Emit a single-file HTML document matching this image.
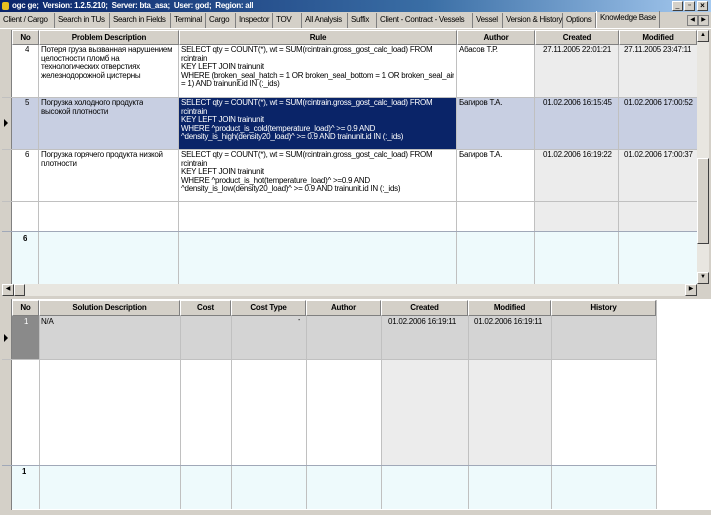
<!DOCTYPE html>
<html><head><meta charset="utf-8"><style>
*{margin:0;padding:0;box-sizing:border-box}
body{width:711px;height:515px;background:#d4d0c8;position:relative;overflow:hidden;font-family:"Liberation Sans",Arial,sans-serif;font-size:8px;color:#000}
.a{position:absolute}
.t{line-height:8.6px;letter-spacing:-0.25px;white-space:nowrap;overflow:hidden}
.hd{position:absolute;background:#d4d0c8;border-right:1px solid #808080;border-bottom:1px solid #808080;border-left:1px solid #fff;border-top:1px solid #fff;font-weight:bold;font-size:8px;text-align:center;line-height:13px;letter-spacing:-0.2px}
.tab{position:absolute;top:13px;height:15px;font-size:8px;line-height:14px;border-right:1px solid #808080;padding-left:3px;letter-spacing:-0.3px;white-space:nowrap}
.vl{position:absolute;width:1px;background:#c0c0c0}
.hl{position:absolute;height:1px;background:#c0c0c0}
</style></head><body>
<!-- title -->
<div class="a" style="left:0;top:0;width:711px;height:12px;background:linear-gradient(90deg,#0a246a,#3a6ea5 60%,#a6caf0)"></div>
<div class="a" style="left:2px;top:2px;width:7px;height:8px;background:#e8c020;border-radius:2px"></div>
<div class="a t" style="left:12px;top:1px;color:#fff;font-weight:bold;font-size:8px;line-height:10px">ogc ge;&nbsp; Version: 1.2.5.210;&nbsp; Server: bta_asa;&nbsp; User: god;&nbsp; Region: all</div>
<div class="a" style="left:672px;top:1px;width:11px;height:10px;background:#d4d0c8;border:1px solid #fff;border-right-color:#404040;border-bottom-color:#404040;font-size:7px;text-align:center;line-height:7px">_</div>
<div class="a" style="left:684px;top:1px;width:11px;height:10px;background:#d4d0c8;border:1px solid #fff;border-right-color:#404040;border-bottom-color:#404040;font-size:7px;text-align:center;line-height:8px">▫</div>
<div class="a" style="left:697px;top:1px;width:11px;height:10px;background:#d4d0c8;border:1px solid #fff;border-right-color:#404040;border-bottom-color:#404040;font-size:8px;font-weight:bold;text-align:center;line-height:8px">×</div>
<!-- tabs -->
<div class="tab" style="left:0;width:55px">Client / Cargo</div>
<div class="tab" style="left:55px;width:55px">Search in TUs</div>
<div class="tab" style="left:110px;width:61px">Search in Fields</div>
<div class="tab" style="left:171px;width:35px">Terminal</div>
<div class="tab" style="left:206px;width:30px">Cargo</div>
<div class="tab" style="left:236px;width:37px">Inspector</div>
<div class="tab" style="left:273px;width:29px">TOV</div>
<div class="tab" style="left:302px;width:46px">All Analysis</div>
<div class="tab" style="left:348px;width:29px">Suffix</div>
<div class="tab" style="left:377px;width:96px">Client - Contract - Vessels</div>
<div class="tab" style="left:473px;width:30px">Vessel</div>
<div class="tab" style="left:503px;width:60px">Version &amp; History</div>
<div class="tab" style="left:563px;width:33px">Options</div>
<div class="tab" style="left:596px;width:64px;top:11px;height:17px;border-left:1px solid #fff">Knowledge Base</div>
<div class="a" style="left:687px;top:15px;width:11px;height:11px;border:1px solid #808080;background:#d4d0c8;font-size:6px;text-align:center;line-height:9px">◀</div>
<div class="a" style="left:698px;top:15px;width:11px;height:11px;border:1px solid #808080;background:#d4d0c8;font-size:6px;text-align:center;line-height:9px">▶</div>
<div class="a" style="left:0;top:28px;width:711px;height:1px;background:#fff"></div>

<!-- upper grid -->
<div class="a" style="left:2px;top:30px;width:695px;height:254px;background:#fff"></div>
<div class="a" style="left:2px;top:30px;width:10px;height:254px;background:#d4d0c8;border-right:1px solid #808080"></div>
<div class="hd" style="left:12px;top:30px;width:27px;height:15px">No</div>
<div class="hd" style="left:39px;top:30px;width:140px;height:15px">Problem Description</div>
<div class="hd" style="left:179px;top:30px;width:278px;height:15px">Rule</div>
<div class="hd" style="left:457px;top:30px;width:78px;height:15px">Author</div>
<div class="hd" style="left:535px;top:30px;width:84px;height:15px">Created</div>
<div class="hd" style="left:619px;top:30px;width:78px;height:15px">Modified</div>
<!-- gray created/modified -->
<div class="a" style="left:535px;top:45px;width:162px;height:187px;background:#ececec"></div>
<!-- row5 selected -->
<div class="a" style="left:12px;top:98px;width:685px;height:51px;background:#c8cfe2"></div>
<div class="a" style="left:179px;top:98px;width:278px;height:51px;background:#0a2468"></div>
<!-- new row -->
<div class="a" style="left:12px;top:232px;width:685px;height:52px;background:#eefafc"></div>
<!-- grid lines -->
<div class="vl" style="left:38px;top:45px;height:239px"></div>
<div class="vl" style="left:178px;top:45px;height:239px"></div>
<div class="vl" style="left:456px;top:45px;height:239px"></div>
<div class="vl" style="left:534px;top:45px;height:239px"></div>
<div class="vl" style="left:618px;top:45px;height:239px"></div>
<div class="hl" style="left:2px;top:97px;width:695px"></div>
<div class="hl" style="left:2px;top:149px;width:695px"></div>
<div class="hl" style="left:2px;top:201px;width:695px"></div>
<div class="hl" style="left:2px;top:231px;width:695px;background:#a0a8b8"></div>
<div class="a" style="left:4px;top:119px;width:0;height:0;border-top:4px solid transparent;border-bottom:4px solid transparent;border-left:4px solid #000"></div>
<!-- row texts -->
<div class="a t" style="left:25px;top:46px">4</div>
<div class="a t" style="left:41px;top:46px">Потеря груза вызванная нарушением<br>целостности пломб на<br>технологических отверстиях<br>железнодорожной цистерны</div>
<div class="a t" style="left:181px;top:46px">SELECT qty = COUNT(*), wt = SUM(rcintrain.gross_gost_calc_load) FROM<br>rcintrain<br>KEY LEFT JOIN trainunit<br>WHERE (broken_seal_hatch = 1 OR broken_seal_bottom = 1 OR broken_seal_air<br>= 1) AND trainunit.id IN (:_ids)</div>
<div class="a t" style="left:459px;top:46px">Абасов Т.Р.</div>
<div class="a t" style="left:543px;top:46px">27.11.2005 22:01:21</div>
<div class="a t" style="left:624px;top:46px">27.11.2005 23:47:11</div>

<div class="a t" style="left:25px;top:99px">5</div>
<div class="a t" style="left:41px;top:99px">Погрузка холодного продукта<br>высокой плотности</div>
<div class="a t" style="left:181px;top:99px;color:#fff">SELECT qty = COUNT(*), wt = SUM(rcintrain.gross_gost_calc_load) FROM<br>rcintrain<br>KEY LEFT JOIN trainunit<br>WHERE ^product_is_cold(temperature_load)^ &gt;= 0.9 AND<br>^density_is_high(density20_load)^ &gt;= 0.9 AND trainunit.id IN (:_ids)</div>
<div class="a t" style="left:459px;top:99px">Багиров Т.А.</div>
<div class="a t" style="left:543px;top:99px">01.02.2006 16:15:45</div>
<div class="a t" style="left:624px;top:99px">01.02.2006 17:00:52</div>

<div class="a t" style="left:25px;top:151px">6</div>
<div class="a t" style="left:41px;top:151px">Погрузка горячего продукта низкой<br>плотности</div>
<div class="a t" style="left:181px;top:151px">SELECT qty = COUNT(*), wt = SUM(rcintrain.gross_gost_calc_load) FROM<br>rcintrain<br>KEY LEFT JOIN trainunit<br>WHERE ^product_is_hot(temperature_load)^ &gt;=0.9 AND<br>^density_is_low(density20_load)^ &gt;= 0.9 AND trainunit.id IN (:_ids)</div>
<div class="a t" style="left:459px;top:151px">Багиров Т.А.</div>
<div class="a t" style="left:543px;top:151px">01.02.2006 16:19:22</div>
<div class="a t" style="left:624px;top:151px">01.02.2006 17:00:37</div>
<div class="a t" style="left:23px;top:235px;font-weight:bold">6</div>

<!-- vscroll -->
<div class="a" style="left:697px;top:30px;width:12px;height:254px;background:#e8e6e0"></div>
<div class="a" style="left:697px;top:30px;width:12px;height:12px;background:#d4d0c8;border:1px solid #fff;border-right-color:#404040;border-bottom-color:#404040;font-size:6px;text-align:center;line-height:9px">▲</div>
<div class="a" style="left:697px;top:158px;width:12px;height:86px;background:#d4d0c8;border:1px solid #fff;border-right-color:#404040;border-bottom-color:#404040"></div>
<div class="a" style="left:697px;top:272px;width:12px;height:12px;background:#d4d0c8;border:1px solid #fff;border-right-color:#404040;border-bottom-color:#404040;font-size:6px;text-align:center;line-height:9px">▼</div>
<!-- hscroll -->
<div class="a" style="left:2px;top:284px;width:695px;height:12px;background:#e8e6e0"></div>
<div class="a" style="left:2px;top:284px;width:12px;height:12px;background:#d4d0c8;border:1px solid #fff;border-right-color:#404040;border-bottom-color:#404040;font-size:6px;text-align:center;line-height:9px">◀</div>
<div class="a" style="left:14px;top:284px;width:11px;height:12px;background:#d4d0c8;border:1px solid #fff;border-right-color:#404040;border-bottom-color:#404040"></div>
<div class="a" style="left:685px;top:284px;width:12px;height:12px;background:#d4d0c8;border:1px solid #fff;border-right-color:#404040;border-bottom-color:#404040;font-size:6px;text-align:center;line-height:9px">▶</div>

<!-- lower grid -->
<div class="a" style="left:2px;top:299px;width:709px;height:211px;background:#fff"></div>
<div class="a" style="left:2px;top:299px;width:10px;height:211px;background:#d4d0c8;border-right:1px solid #808080"></div>
<div class="hd" style="left:12px;top:300px;width:27px;height:16px">No</div>
<div class="hd" style="left:39px;top:300px;width:141px;height:16px">Solution Description</div>
<div class="hd" style="left:180px;top:300px;width:51px;height:16px">Cost</div>
<div class="hd" style="left:231px;top:300px;width:75px;height:16px">Cost Type</div>
<div class="hd" style="left:306px;top:300px;width:75px;height:16px">Author</div>
<div class="hd" style="left:381px;top:300px;width:87px;height:16px">Created</div>
<div class="hd" style="left:468px;top:300px;width:83px;height:16px">Modified</div>
<div class="hd" style="left:551px;top:300px;width:105px;height:16px">History</div>
<div class="a" style="left:381px;top:316px;width:170px;height:149px;background:#ececec"></div>
<div class="a" style="left:12px;top:316px;width:644px;height:43px;background:#d4d4d4"></div>
<div class="a" style="left:12px;top:316px;width:27px;height:43px;background:#8a8a8a"></div>
<div class="a" style="left:12px;top:465px;width:644px;height:44px;background:#eefafc"></div>
<div class="vl" style="left:39px;top:316px;height:193px"></div>
<div class="vl" style="left:180px;top:316px;height:193px"></div>
<div class="vl" style="left:231px;top:316px;height:193px"></div>
<div class="vl" style="left:306px;top:316px;height:193px"></div>
<div class="vl" style="left:381px;top:316px;height:193px"></div>
<div class="vl" style="left:468px;top:316px;height:193px"></div>
<div class="vl" style="left:551px;top:316px;height:193px"></div>
<div class="vl" style="left:656px;top:300px;height:209px"></div>
<div class="hl" style="left:2px;top:359px;width:654px"></div>
<div class="hl" style="left:2px;top:465px;width:654px;background:#a0a8b8"></div>
<div class="a" style="left:4px;top:334px;width:0;height:0;border-top:4px solid transparent;border-bottom:4px solid transparent;border-left:4px solid #000"></div>
<div class="a t" style="left:24px;top:318px;color:#fff">1</div>
<div class="a t" style="left:41px;top:318px">N/A</div>
<div class="a t" style="left:298px;top:316px">-</div>
<div class="a t" style="left:388px;top:318px">01.02.2006 16:19:11</div>
<div class="a t" style="left:474px;top:318px">01.02.2006 16:19:11</div>
<div class="a t" style="left:22px;top:468px;font-weight:bold">1</div>
<div class="a" style="left:0;top:510px;width:711px;height:5px;background:#d4d0c8"></div>
</body></html>
